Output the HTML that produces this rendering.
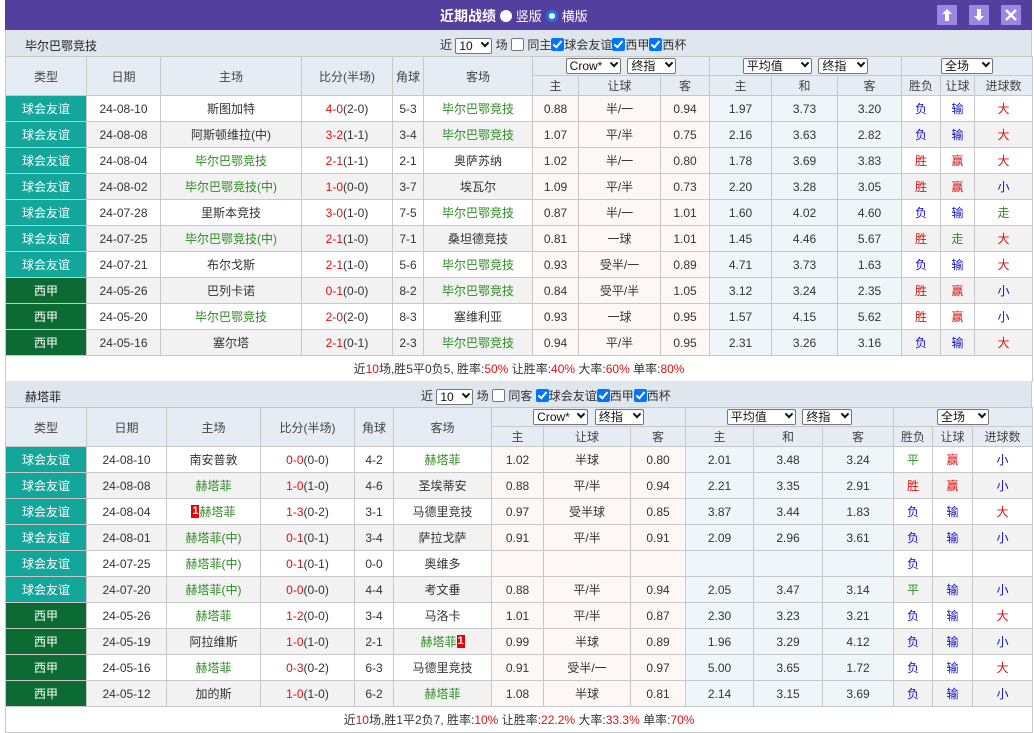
<!DOCTYPE html>
<html><head><meta charset="utf-8">
<style>
*{box-sizing:border-box;margin:0;padding:0}
body{width:1034px;height:732px;background:#fff;font-family:"Liberation Sans","Noto Sans CJK SC",sans-serif;font-size:12px;color:#333;position:relative;overflow:hidden}
.top{position:absolute;left:5px;top:0;width:1027px;height:30px;background:#533f9e;color:#fff}
.top .t{position:absolute;left:435px;top:6px;font-size:14px;font-weight:bold}
.rad{display:inline-block;width:12px;height:12px;border-radius:50%;background:#fff;vertical-align:-1px}
.rad2{display:inline-block;width:12px;height:12px;border-radius:50%;background:#fff;border:3px solid #1a73e8;vertical-align:-1px}
.btn{position:absolute;top:5px;width:20px;height:20px;background:#9b86e6}
.ttl{position:absolute;left:5px;width:1027px;height:26px;background:#dfe6ee;border-left:1px solid #ccc;border-right:1px solid #ccc}
.ttl .n{position:absolute;left:19px;top:7px;font-size:12px;color:#222}
.ttl .c{position:absolute;top:6px;font-size:12px;white-space:nowrap;color:#333}
.sel{display:inline-block;height:16px;border:1px solid #767676;border-radius:2px;background:#fff;padding:0 3px;line-height:14px;font-size:12px;color:#111;vertical-align:middle;position:relative;text-align:left}
.sel i{position:absolute;right:3px;top:4px;width:6px;height:6px;border-right:2px solid #111;border-bottom:2px solid #111;transform:rotate(45deg) translate(-2px,-2px)}
.cb{display:inline-block;width:13px;height:13px;border-radius:2px;background:#0075ff;vertical-align:-2px;position:relative}
.cb:after{content:"";position:absolute;left:4px;top:1px;width:3px;height:7px;border-right:2px solid #fff;border-bottom:2px solid #fff;transform:rotate(40deg)}
.cb0{display:inline-block;width:13px;height:13px;border-radius:2px;border:1px solid #767676;background:#fff;vertical-align:-2px}
table{position:absolute;left:5px;border-collapse:collapse;table-layout:fixed;width:1027px}
td{border:1px solid #c8c8c8;text-align:center;white-space:nowrap;overflow:hidden;height:26px;font-size:12px;color:#333}
tr.h td{background:#e6ecf3;height:20px;color:#444}
tr.h1 td{height:19px}
tr.g td{background:#f2f2f2}
td.k{background:#13a69b!important;color:#fff}
td.x{background:#0b6b33!important;color:#fff}
td.p{background:#fdf8f5!important}
td.b{background:#eff6fa!important}
.gr{color:#2e8b22}.rd{color:#e01010}.bl{color:#1010c8}
.s{color:#e01010}
td.sum{height:26px;background:#fff}
.one{display:inline-block;background:#e00;color:#fff;font-weight:bold;width:8px;height:13px;line-height:13px;font-size:11px;vertical-align:middle;margin-top:-2px}
</style></head><body>
<div class="top"><span class="t">近期战绩 <span class="rad"></span> <span style="font-size:13px;font-weight:normal">竖版</span> <span class="rad2"></span> <span style="font-size:13px;font-weight:normal">横版</span></span>
<div class="btn" style="left:932px"><svg width="20" height="20"><path d="M10 4L5 9h3v7h4V9h3z" fill="#fff"/></svg></div>
<div class="btn" style="left:964px"><svg width="20" height="20"><path d="M10 16L5 11h3V4h4v7h3z" fill="#fff"/></svg></div>
<div class="btn" style="left:996px"><svg width="20" height="20"><path d="M5 5L15 15M15 5L5 15" stroke="#fff" stroke-width="2.5"/></svg></div>
</div>

<div class="ttl" style="top:30px"><span class="n">毕尔巴鄂竞技</span><span class="c" style="left:434px">近 <span class="sel" style="width:37px">10<i></i></span> 场 <span class="cb0"></span> 同主<span class="cb"></span>球会友谊<span class="cb"></span>西甲<span class="cb"></span>西杯</span></div>

<table style="top:56px">
<colgroup><col style="width:81px"><col style="width:74px"><col style="width:141px"><col style="width:91px"><col style="width:31px"><col style="width:109px"><col style="width:46px"><col style="width:82px"><col style="width:49px"><col style="width:62px"><col style="width:66px"><col style="width:64px"><col style="width:39px"><col style="width:34px"><col style="width:58px"></colgroup>
<tr class="h h1"><td rowspan="2">类型</td><td rowspan="2">日期</td><td rowspan="2">主场</td><td rowspan="2">比分(半场)</td><td rowspan="2">角球</td><td rowspan="2">客场</td><td colspan="3"><span class="sel" style="width:55px">Crow*<i></i></span> &nbsp;<span class="sel" style="width:49px">终指<i></i></span></td><td colspan="3"><span class="sel" style="width:69px">平均值<i></i></span> &nbsp;<span class="sel" style="width:50px">终指<i></i></span></td><td colspan="3"><span class="sel" style="width:52px">全场<i></i></span></td></tr>
<tr class="h"><td>主</td><td>让球</td><td>客</td><td>主</td><td>和</td><td>客</td><td>胜负</td><td>让球</td><td>进球数</td></tr>
<tr><td class="k">球会友谊</td><td>24-08-10</td><td>斯图加特</td><td><span class="s">4-0</span>(2-0)</td><td>5-3</td><td class="gr">毕尔巴鄂竞技</td><td class="p">0.88</td><td class="p">半/一</td><td class="p">0.94</td><td class="b">1.97</td><td class="b">3.73</td><td class="b">3.20</td><td class="bl">负</td><td class="bl">输</td><td class="rd">大</td></tr>
<tr class="g"><td class="k">球会友谊</td><td>24-08-08</td><td>阿斯顿维拉(中)</td><td><span class="s">3-2</span>(1-1)</td><td>3-4</td><td class="gr">毕尔巴鄂竞技</td><td class="p">1.07</td><td class="p">平/半</td><td class="p">0.75</td><td class="b">2.16</td><td class="b">3.63</td><td class="b">2.82</td><td class="bl">负</td><td class="bl">输</td><td class="rd">大</td></tr>
<tr><td class="k">球会友谊</td><td>24-08-04</td><td class="gr">毕尔巴鄂竞技</td><td><span class="s">2-1</span>(1-1)</td><td>2-1</td><td>奥萨苏纳</td><td class="p">1.02</td><td class="p">半/一</td><td class="p">0.80</td><td class="b">1.78</td><td class="b">3.69</td><td class="b">3.83</td><td class="rd">胜</td><td class="rd">赢</td><td class="rd">大</td></tr>
<tr class="g"><td class="k">球会友谊</td><td>24-08-02</td><td class="gr">毕尔巴鄂竞技(中)</td><td><span class="s">1-0</span>(0-0)</td><td>3-7</td><td>埃瓦尔</td><td class="p">1.09</td><td class="p">平/半</td><td class="p">0.73</td><td class="b">2.20</td><td class="b">3.28</td><td class="b">3.05</td><td class="rd">胜</td><td class="rd">赢</td><td class="bl">小</td></tr>
<tr><td class="k">球会友谊</td><td>24-07-28</td><td>里斯本竞技</td><td><span class="s">3-0</span>(1-0)</td><td>7-5</td><td class="gr">毕尔巴鄂竞技</td><td class="p">0.87</td><td class="p">半/一</td><td class="p">1.01</td><td class="b">1.60</td><td class="b">4.02</td><td class="b">4.60</td><td class="bl">负</td><td class="bl">输</td><td class="gr">走</td></tr>
<tr class="g"><td class="k">球会友谊</td><td>24-07-25</td><td class="gr">毕尔巴鄂竞技(中)</td><td><span class="s">2-1</span>(1-0)</td><td>7-1</td><td>桑坦德竞技</td><td class="p">0.81</td><td class="p">一球</td><td class="p">1.01</td><td class="b">1.45</td><td class="b">4.46</td><td class="b">5.67</td><td class="rd">胜</td><td class="gr">走</td><td class="rd">大</td></tr>
<tr><td class="k">球会友谊</td><td>24-07-21</td><td>布尔戈斯</td><td><span class="s">2-1</span>(1-0)</td><td>5-6</td><td class="gr">毕尔巴鄂竞技</td><td class="p">0.93</td><td class="p">受半/一</td><td class="p">0.89</td><td class="b">4.71</td><td class="b">3.73</td><td class="b">1.63</td><td class="bl">负</td><td class="bl">输</td><td class="rd">大</td></tr>
<tr class="g"><td class="x">西甲</td><td>24-05-26</td><td>巴列卡诺</td><td><span class="s">0-1</span>(0-0)</td><td>8-2</td><td class="gr">毕尔巴鄂竞技</td><td class="p">0.84</td><td class="p">受平/半</td><td class="p">1.05</td><td class="b">3.12</td><td class="b">3.24</td><td class="b">2.35</td><td class="rd">胜</td><td class="rd">赢</td><td class="bl">小</td></tr>
<tr><td class="x">西甲</td><td>24-05-20</td><td class="gr">毕尔巴鄂竞技</td><td><span class="s">2-0</span>(2-0)</td><td>8-3</td><td>塞维利亚</td><td class="p">0.93</td><td class="p">一球</td><td class="p">0.95</td><td class="b">1.57</td><td class="b">4.15</td><td class="b">5.62</td><td class="rd">胜</td><td class="rd">赢</td><td class="bl">小</td></tr>
<tr class="g"><td class="x">西甲</td><td>24-05-16</td><td>塞尔塔</td><td><span class="s">2-1</span>(0-1)</td><td>2-3</td><td class="gr">毕尔巴鄂竞技</td><td class="p">0.94</td><td class="p">平/半</td><td class="p">0.95</td><td class="b">2.31</td><td class="b">3.26</td><td class="b">3.16</td><td class="bl">负</td><td class="bl">输</td><td class="rd">大</td></tr>
<tr><td class="sum" colspan="15">近<span class="s">10</span>场,胜5平0负5, 胜率:<span class="s">50%</span> 让胜率:<span class="s">40%</span> 大率:<span class="s">60%</span> 单率:<span class="s">80%</span></td></tr>
</table>

<div class="ttl" style="top:381px"><span class="n">赫塔菲</span><span class="c" style="left:415px">近 <span class="sel" style="width:37px">10<i></i></span> 场 <span class="cb0"></span> 同客 <span class="cb"></span>球会友谊<span class="cb"></span>西甲<span class="cb"></span>西杯</span></div>

<table style="top:407px">
<colgroup><col style="width:81px"><col style="width:80px"><col style="width:94px"><col style="width:94px"><col style="width:39px"><col style="width:98px"><col style="width:52px"><col style="width:87px"><col style="width:55px"><col style="width:68px"><col style="width:69px"><col style="width:71px"><col style="width:39px"><col style="width:40px"><col style="width:60px"></colgroup>
<tr class="h h1"><td rowspan="2">类型</td><td rowspan="2">日期</td><td rowspan="2">主场</td><td rowspan="2">比分(半场)</td><td rowspan="2">角球</td><td rowspan="2">客场</td><td colspan="3"><span class="sel" style="width:55px">Crow*<i></i></span> &nbsp;<span class="sel" style="width:49px">终指<i></i></span></td><td colspan="3"><span class="sel" style="width:69px">平均值<i></i></span> &nbsp;<span class="sel" style="width:50px">终指<i></i></span></td><td colspan="3"><span class="sel" style="width:52px">全场<i></i></span></td></tr>
<tr class="h"><td>主</td><td>让球</td><td>客</td><td>主</td><td>和</td><td>客</td><td>胜负</td><td>让球</td><td>进球数</td></tr>
<tr><td class="k">球会友谊</td><td>24-08-10</td><td>南安普敦</td><td><span class="s">0-0</span>(0-0)</td><td>4-2</td><td class="gr">赫塔菲</td><td class="p">1.02</td><td class="p">半球</td><td class="p">0.80</td><td class="b">2.01</td><td class="b">3.48</td><td class="b">3.24</td><td class="gr">平</td><td class="rd">赢</td><td class="bl">小</td></tr>
<tr class="g"><td class="k">球会友谊</td><td>24-08-08</td><td class="gr">赫塔菲</td><td><span class="s">1-0</span>(1-0)</td><td>4-6</td><td>圣埃蒂安</td><td class="p">0.88</td><td class="p">平/半</td><td class="p">0.94</td><td class="b">2.21</td><td class="b">3.35</td><td class="b">2.91</td><td class="rd">胜</td><td class="rd">赢</td><td class="bl">小</td></tr>
<tr><td class="k">球会友谊</td><td>24-08-04</td><td class="gr"><span class="one">1</span>赫塔菲</td><td><span class="s">1-3</span>(0-2)</td><td>3-1</td><td>马德里竞技</td><td class="p">0.97</td><td class="p">受半球</td><td class="p">0.85</td><td class="b">3.87</td><td class="b">3.44</td><td class="b">1.83</td><td class="bl">负</td><td class="bl">输</td><td class="rd">大</td></tr>
<tr class="g"><td class="k">球会友谊</td><td>24-08-01</td><td class="gr">赫塔菲(中)</td><td><span class="s">0-1</span>(0-1)</td><td>3-4</td><td>萨拉戈萨</td><td class="p">0.91</td><td class="p">平/半</td><td class="p">0.91</td><td class="b">2.09</td><td class="b">2.96</td><td class="b">3.61</td><td class="bl">负</td><td class="bl">输</td><td class="bl">小</td></tr>
<tr><td class="k">球会友谊</td><td>24-07-25</td><td class="gr">赫塔菲(中)</td><td><span class="s">0-1</span>(0-1)</td><td>0-0</td><td>奥维多</td><td class="p"></td><td class="p"></td><td class="p"></td><td class="b"></td><td class="b"></td><td class="b"></td><td class="bl">负</td><td></td><td></td></tr>
<tr class="g"><td class="k">球会友谊</td><td>24-07-20</td><td class="gr">赫塔菲(中)</td><td><span class="s">0-0</span>(0-0)</td><td>4-4</td><td>考文垂</td><td class="p">0.88</td><td class="p">平/半</td><td class="p">0.94</td><td class="b">2.05</td><td class="b">3.47</td><td class="b">3.14</td><td class="gr">平</td><td class="bl">输</td><td class="bl">小</td></tr>
<tr><td class="x">西甲</td><td>24-05-26</td><td class="gr">赫塔菲</td><td><span class="s">1-2</span>(0-0)</td><td>3-4</td><td>马洛卡</td><td class="p">1.01</td><td class="p">平/半</td><td class="p">0.87</td><td class="b">2.30</td><td class="b">3.23</td><td class="b">3.21</td><td class="bl">负</td><td class="bl">输</td><td class="rd">大</td></tr>
<tr class="g"><td class="x">西甲</td><td>24-05-19</td><td>阿拉维斯</td><td><span class="s">1-0</span>(1-0)</td><td>2-1</td><td class="gr">赫塔菲<span class="one">1</span></td><td class="p">0.99</td><td class="p">半球</td><td class="p">0.89</td><td class="b">1.96</td><td class="b">3.29</td><td class="b">4.12</td><td class="bl">负</td><td class="bl">输</td><td class="bl">小</td></tr>
<tr><td class="x">西甲</td><td>24-05-16</td><td class="gr">赫塔菲</td><td><span class="s">0-3</span>(0-2)</td><td>6-3</td><td>马德里竞技</td><td class="p">0.91</td><td class="p">受半/一</td><td class="p">0.97</td><td class="b">5.00</td><td class="b">3.65</td><td class="b">1.72</td><td class="bl">负</td><td class="bl">输</td><td class="rd">大</td></tr>
<tr class="g"><td class="x">西甲</td><td>24-05-12</td><td>加的斯</td><td><span class="s">1-0</span>(1-0)</td><td>6-2</td><td class="gr">赫塔菲</td><td class="p">1.08</td><td class="p">半球</td><td class="p">0.81</td><td class="b">2.14</td><td class="b">3.15</td><td class="b">3.69</td><td class="bl">负</td><td class="bl">输</td><td class="bl">小</td></tr>
<tr><td class="sum" colspan="15">近<span class="s">10</span>场,胜1平2负7, 胜率:<span class="s">10%</span> 让胜率:<span class="s">22.2%</span> 大率:<span class="s">33.3%</span> 单率:<span class="s">70%</span></td></tr>
</table>
</body></html>
